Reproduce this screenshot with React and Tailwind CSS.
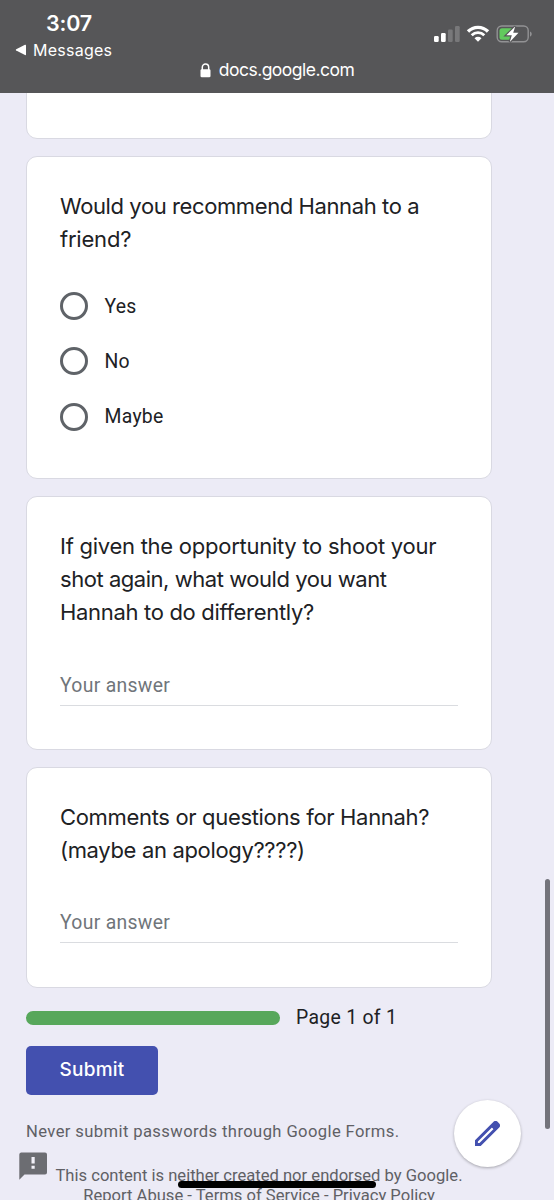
const CARD = "w-[466px] shrink-0 rounded-[11px] border border-[#d9d9e2] bg-white px-[33px]";
const TITLE = "font-['Inter',sans-serif] text-[22px] leading-[33.2px] text-[#202124] whitespace-nowrap";

function StatusBar() {
  return (
    <header className="relative z-10 flex h-[93px] shrink-0 flex-col bg-[#565658] font-['Inter',sans-serif] text-white">
      <div className="flex h-[60px] items-start justify-between pl-[15px] pr-[21px]">
        <div className="flex flex-col">
          <span className="mt-[10px] pl-[31px] text-[21.5px] font-semibold leading-[27px] tracking-[-0.2px]">3:07</span>
          <span className="flex h-[26px] items-center gap-[6px] text-[16px] tracking-[0.26px]">
            <svg width="12" height="12" viewBox="0 0 12 12" fill="currentColor">
              <path d="M1.2 5.3 10 .8q1-.4 1 .7v9q0 1-1 .6L1.2 6.6q-1-.6 0-1.300z" />
            </svg>
            Messages
          </span>
        </div>
        <svg className="mt-[25px]" width="100" height="18" viewBox="0 0 100 18" fill="none">
          <rect x="1" y="11" width="4.700" height="6" rx="1.200" fill="#fff" />
          <rect x="8" y="8" width="4.700" height="9" rx="1.200" fill="#fff" />
          <rect x="15" y="4.500" width="4.700" height="12.500" rx="1.200" fill="#78787a" />
          <rect x="22" y="1" width="4.700" height="16" rx="1.200" fill="#78787a" />
          <path d="M35 6.500a14 14 0 0 1 20 0" stroke="#fff" strokeWidth="3.300" />
          <path d="M38.700 10.200a9 9 0 0 1 12.600 0" stroke="#fff" strokeWidth="2.800" />
          <path d="M45 16.800 41.500 13.300a5 5 0 0 1 7 0z" fill="#fff" />
          <rect x="64.200" y="1" width="31" height="15.800" rx="4.500" stroke="#929294" strokeWidth="1.400" />
          <path d="M97 6.400c2.300.8 2.300 4.300 0 5.100z" fill="#929294" />
          <rect x="66.500" y="3.200" width="13.500" height="11.500" rx="2.500" fill="#62ca5e" />
          <path d="M82.200 1.500 73.300 10.300h5.500L76.800 17 85.500 7.800h-5.300z" fill="#fff" stroke="#565658" strokeWidth="2.400" paintOrder="stroke" />
        </svg>
      </div>
      <div className="flex h-[20px] items-center justify-center gap-[8px] text-[17.500px] tracking-[-0.520px]">
        <svg width="11" height="15" viewBox="0 0 11 15" fill="none">
          <path d="M2.300 7V4.300a3.200 3.400 0 0 1 6.400 0V7" stroke="#fff" strokeWidth="1.500" />
          <rect x="0.500" y="6.300" width="10" height="8" rx="1.300" fill="#fff" />
        </svg>
        <span>docs.google.com</span>
      </div>
    </header>
  );
}

function Option({ label }) {
  return (
    <div className="flex h-[55.300px] items-center gap-[16.500px]">
      <span className="size-[28px] rounded-full border-3 border-[#5f6368]" />
      <span className="text-[19.400px] tracking-[0.280px] text-[#202124]">{label}</span>
    </div>
  );
}

function Answer() {
  return (
    <div className="h-[34px] w-[398px] border-b border-[#dadce0] text-[19.400px] leading-[28px] tracking-[0.300px] text-[#70757a]">
      Your answer
    </div>
  );
}

export default function App() {
  return (
    <div className="relative flex h-[1200px] w-[554px] flex-col overflow-hidden bg-[#ecebf6] font-['Roboto',sans-serif]">
      <StatusBar />
      <main className="flex flex-col pl-[26px]">
        <section className={`${CARD} -mt-[20px] h-[66px]`} />

        <section className={`${CARD} mt-[17px] h-[323px] pt-[33px]`}>
          <h2 className={TITLE}>
            <span className="block tracking-[-0.400px]">Would you recommend Hannah to a</span>
            <span className="block tracking-[-0.200px]">friend?</span>
          </h2>
          <div className="mt-[22px]">
            <Option label="Yes" />
            <Option label="No" />
            <Option label="Maybe" />
          </div>
        </section>

        <section className={`${CARD} mt-[17px] h-[254px] pt-[33px]`}>
          <h2 className={TITLE}>
            <span className="block tracking-[-0.260px]">If given the opportunity to shoot your</span>
            <span className="block tracking-[-0.460px]">shot again, what would you want</span>
            <span className="block tracking-[-0.320px]">Hannah to do differently?</span>
          </h2>
          <div className="mt-[42px]"><Answer /></div>
        </section>

        <section className={`${CARD} mt-[17px] h-[221px] pt-[33px]`}>
          <h2 className={TITLE}>
            <span className="block tracking-[-0.330px]">Comments or questions for Hannah?</span>
            <span className="block tracking-[-0.340px]">(maybe an apology????)</span>
          </h2>
          <div className="mt-[42px]"><Answer /></div>
        </section>

        <div className="mt-[16px] flex h-[28px] items-center gap-[16px]">
          <div className="h-[14px] w-[254px] rounded-full bg-[#57a75b]" />
          <span className="text-[19.400px] tracking-[0.300px] text-[#202124]">Page 1 of 1</span>
        </div>

        <button className="mt-[14px] h-[49px] w-[132px] rounded-[5px] bg-[#4350af] pb-[1px] font-['Inter',sans-serif] text-[19px] font-medium tracking-[0.250px] text-white">
          Submit
        </button>

        <p className="mt-[25px] h-[24px] whitespace-nowrap text-[16.600px] leading-[24px] tracking-[0.390px] text-[#5f6065]">
          Never submit passwords through Google Forms.
        </p>
      </main>

      <footer className="mt-[7px] flex pl-[18px] text-[16.600px] leading-[20px] text-[#5f6065]">
        <svg className="shrink-0" width="30" height="30" viewBox="0 0 30 30">
          <path d="M3 1.500h24a2 2 0 0 1 2 2v18a2 2 0 0 1-2 2H6.500L1.300 28.700V3.500a2 2 0 0 1 1.700-2z" fill="#6c6d72" />
          <path d="M13.500 6h3.200v6.500h-3.200zM13.500 14.800h3.200v3h-3.200z" fill="#f1f0f8" />
        </svg>
        <div className="w-[422px] pt-[15px] text-center whitespace-nowrap">
          <div>This content is neither created nor endorsed by Google.</div>
          <div>Report Abuse - Terms of Service - Privacy Policy</div>
        </div>
      </footer>

      <div className="absolute left-[545px] top-[879px] h-[250px] w-[5px] rounded-full bg-[#73737b]" />
      <div className="absolute left-[454px] top-[1100px] flex size-[67px] items-center justify-center rounded-full bg-white shadow-[0_1px_3px_rgba(0,0,0,0.3)]">
        <svg width="25" height="25" viewBox="0 0 25 25">
          <path d="M0 19.300 18.300 1a3.200 3.200 0 0 1 4.500 0l1.200 1.200a3.200 3.200 0 0 1 0 4.500L5.700 25H0zM2.900 20.500v1.600h1.600L18.600 8 17 6.400z" fill="#4350af" fillRule="evenodd" />
          <path d="m15.800 5.200 4 4 4.200-3.500-4.500-4.500z" fill="#4350af" />
        </svg>
      </div>
      <div className="absolute left-[178px] top-[1181px] h-[7px] w-[198px] rounded-full bg-black" />
    </div>
  );
}
